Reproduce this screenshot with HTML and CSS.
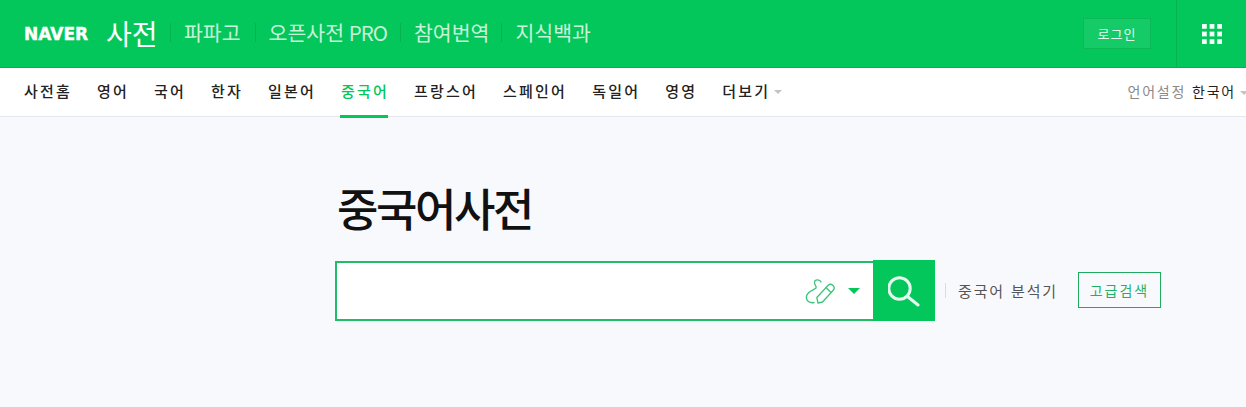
FILE: index.html
```html
<!DOCTYPE html>
<html lang="ko">
<head>
<meta charset="utf-8">
<title>중국어사전</title>
<link rel="stylesheet" href="styles.css">
</head>
<body>
<header class="top">
  <a class="naver">NAVER</a>
  <a class="service">사전</a>
  <nav class="services">
    <a class="papago">파파고</a>
    <a>오픈사전 <span class="pro">PRO</span></a>
    <a class="join">참여번역</a>
    <a>지식백과</a>
  </nav>
  <a class="login">로그인</a>
  <div class="apps">
    <svg width="20" height="20" viewBox="0 0 21 21" fill="#f4fff9">
      <rect x="0" y="0" width="5" height="5"/><rect x="8" y="0" width="5" height="5"/><rect x="16" y="0" width="5" height="5"/>
      <rect x="0" y="8" width="5" height="5"/><rect x="8" y="8" width="5" height="5"/><rect x="16" y="8" width="5" height="5"/>
      <rect x="0" y="16" width="5" height="5"/><rect x="8" y="16" width="5" height="5"/><rect x="16" y="16" width="5" height="5"/>
    </svg>
  </div>
</header>
<nav class="tabs">
  <a>사전홈</a>
  <a>영어</a>
  <a>국어</a>
  <a>한자</a>
  <a>일본어</a>
  <a class="on">중국어</a>
  <a>프랑스어</a>
  <a>스페인어</a>
  <a>독일어</a>
  <a>영영</a>
  <a class="more">더보기</a>
  <div class="lang"><span class="lang-label">언어설정</span> <span class="lang-value">한국어</span><i class="caret-gray"></i></div>
</nav>
<main class="main">
  <h1 class="title">중국어사전</h1>
  <div class="search-row">
    <form class="search">
      <div class="field">
        <svg class="pen" width="31" height="27" viewBox="0 0 31 27" fill="none" stroke="#3cc47d" stroke-width="1.3" stroke-linecap="round" stroke-linejoin="round">
          <path d="M16 4C15 1.500 10 .8 9.500 4C9 7 12 8 11 10C9 12 3 13 1.500 18C.5 23 5 25.500 9 24.500"/>
          <path d="M13 25L11.800 19.500L23 7.500C24.500 6 26.500 6 28 7.500C29.500 9 29.500 11 28 12.500L17.500 24Z"/>
          <path d="M21 9.500L26 14.500"/>
        </svg>
        <i class="caret-green"></i>
      </div>
      <button class="go" type="button">
        <svg width="32" height="32" viewBox="0 0 32 32" fill="none" stroke="#e6f9ee" stroke-width="3" stroke-linecap="round">
          <circle cx="11.500" cy="13.500" r="10.700"/>
          <path d="M19.500 21.500L30 30"/>
        </svg>
      </button>
    </form>
    <a class="analyzer">중국어 분석기</a>
    <a class="advanced">고급검색</a>
  </div>
</main>
</body>
</html>
```
FILE: styles.css
```css
* { box-sizing: border-box; }
html, body { margin: 0; padding: 0; }
body {
  background: #f8f9fc;
  font-family: "Noto Sans CJK KR", "Noto Sans", sans-serif;
  height: 407px;
  overflow: hidden;
}
.top {
  height: 68px;
  background: #03c75a;
  border-bottom: 1px solid #02b350;
  display: flex;
  align-items: center;
  padding-left: 24px;
  color: #fff;
}
.naver {
  font-family: "DejaVu Sans", sans-serif;
  font-weight: 700;
  font-size: 17px;
  width: 65px;
  white-space: nowrap;
  -webkit-text-stroke: 0.4px #fff;
}
.service {
  margin-left: 17px;
  margin-bottom: 1px;
  font-size: 28px;
  line-height: 34px;
  width: 52px;
  white-space: nowrap;
}
.services {
  display: flex;
  align-items: center;
  margin-left: 12px;
  margin-bottom: 3px;
}
.services a {
  font-size: 20.500px;
  line-height: 28px;
  color: #c8f2d9;
  padding: 0 13px 0 14px;
  white-space: nowrap;
  position: relative;
}
.services .papago { padding-right: 14px; }
.services .join { padding-right: 12px; }
.services a::before {
  content: "";
  position: absolute;
  left: 0;
  top: 5px;
  height: 19px;
  width: 1px;
  background: #02b350;
}
.pro {
  letter-spacing: -1px;
  margin-left: -1px;
}
.login {
  margin-left: auto;
  width: 68px;
  height: 31px;
  background: #14cb67;
  border: 1px solid #0cb957;
  color: #e0f8ea;
  font-size: 13px;
  letter-spacing: 1.100px;
  display: flex;
  align-items: center;
  justify-content: center;
}
.apps {
  margin-left: 25px;
  width: 70px;
  height: 67px;
  border-left: 1px solid #02b350;
  display: flex;
  align-items: center;
  justify-content: center;
}
.tabs {
  height: 49px;
  background: #fff;
  border-bottom: 1px solid #e4e7ec;
  display: flex;
  padding: 0 0 0 23px;
  gap: 25px;
  align-items: flex-start;
}
.tabs > a {
  position: relative;
  font-size: 15px;
  font-weight: 500;
  letter-spacing: 2.200px;
  color: #222;
  line-height: 46px;
  height: 50px;
  white-space: nowrap;
  text-indent: 1px;
  margin-right: -1px;
}
.tabs > a.on { color: #03c75a; }
.tabs > a.on::after {
  content: "";
  position: absolute;
  left: 0;
  right: 1px;
  bottom: 0;
  height: 3px;
  background: #03c75a;
}
.more::after {
  content: "";
  position: absolute;
  left: 53px;
  top: 22px;
  border: 4px solid transparent;
  border-top: 4px solid #c4c4c4;
  border-bottom: 0;
}
.lang {
  margin-left: auto;
  margin-right: -2px;
  font-size: 14px;
  line-height: 46px;
  white-space: nowrap;
  letter-spacing: 1.800px;
}
.lang-label { color: #888; }
.lang-value { color: #222; }
.caret-gray {
  display: inline-block;
  margin-left: 4px;
  border: 4px solid transparent;
  border-top: 4px solid #c4c4c4;
  border-bottom: 0;
  vertical-align: 2px;
}
.main {
  padding: 66px 0 0 335px;
}
.title {
  margin: 0 0 0 2px;
  font-size: 45px;
  font-weight: 500;
  line-height: 50px;
  color: #111;
  letter-spacing: -2.400px;
}
.search-row {
  margin-top: 27px;
  display: flex;
  align-items: center;
}
.search {
  display: flex;
  width: 600px;
  height: 61px;
  align-items: flex-end;
}
.field {
  flex: 1;
  background: #fff;
  border: 2px solid #1fbd68;
  border-right: 0;
  height: 60px;
  display: flex;
  align-items: center;
  justify-content: flex-end;
  padding-right: 13px;
}
.pen { margin-right: 12px; }
.caret-green {
  border: 6px solid transparent;
  border-top: 6px solid #03c75a;
  border-bottom: 0;
}
.go {
  width: 62px;
  height: 61px;
  border: 0;
  background: #03c75a;
  padding: 0;
  display: flex;
  align-items: center;
  justify-content: center;
}
.analyzer {
  margin-left: 10px;
  padding-left: 13px;
  font-size: 15px;
  color: #555;
  letter-spacing: 1.850px;
  position: relative;
  white-space: nowrap;
}
.analyzer::before {
  content: "";
  position: absolute;
  left: 0;
  top: 3px;
  height: 15px;
  width: 1px;
  background: #d8dbe0;
}
.advanced {
  margin-left: 20px;
  margin-bottom: 1px;
  width: 83px;
  height: 36px;
  border: 1px solid #1fa961;
  color: #1fb066;
  font-size: 14px;
  letter-spacing: 2px;
  display: flex;
  align-items: center;
  justify-content: center;
  white-space: nowrap;
}
```
